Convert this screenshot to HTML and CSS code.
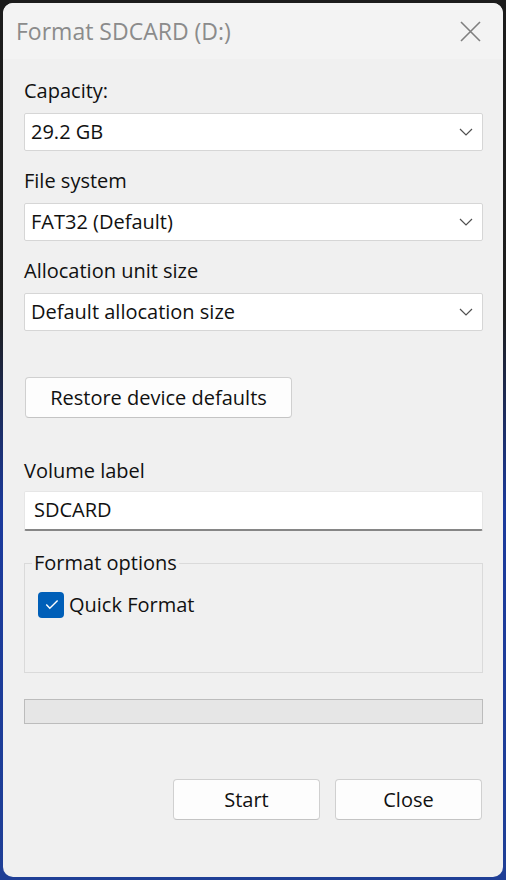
FILE: index.html
```html
<!DOCTYPE html>
<html>
<head>
    <meta charset="utf-8">
    <link rel="stylesheet" href="styles.css">
    <title>Format SDCARD (D:)</title>
</head>
<body>
    <div class="window">
        <div class="titlebar">
            <span class="title">Format SDCARD (D:)</span>
            <svg class="close" width="21" height="21" viewBox="0 0 21 21">
                <path d="M1 1 L20 20 M20 1 L1 20" stroke="#7f7f7f" stroke-width="1.6" fill="none"/>
            </svg>
        </div>

        <div class="content">
            <div class="field-label first">Capacity:</div>
            <div class="select">
                <span>29.2 GB</span>
                <svg class="chevron" width="14" height="8" viewBox="0 0 14 8"><path d="M1 1 L7 7 L13 1" stroke="#505050" stroke-width="1.2" fill="none"/></svg>
            </div>

            <div class="field-label">File system</div>
            <div class="select">
                <span>FAT32 (Default)</span>
                <svg class="chevron" width="14" height="8" viewBox="0 0 14 8"><path d="M1 1 L7 7 L13 1" stroke="#505050" stroke-width="1.2" fill="none"/></svg>
            </div>

            <div class="field-label">Allocation unit size</div>
            <div class="select">
                <span>Default allocation size</span>
                <svg class="chevron" width="14" height="8" viewBox="0 0 14 8"><path d="M1 1 L7 7 L13 1" stroke="#505050" stroke-width="1.2" fill="none"/></svg>
            </div>

            <button class="btn restore">Restore device defaults</button>

            <div class="field-label volume">Volume label</div>
            <div class="textbox">SDCARD</div>

            <fieldset class="group">
                <legend>Format options</legend>
                <label class="check">
                    <span class="box">
                        <svg width="26" height="26" viewBox="0 0 26 26"><path d="M8.3 12.6 L11.8 16.2 L19.6 8.6" stroke="#fff" stroke-width="1.4" fill="none"/></svg>
                    </span>
                    Quick Format
                </label>
            </fieldset>

            <div class="progress"></div>

            <div class="actions">
                <button class="btn action">Start</button>
                <button class="btn action">Close</button>
            </div>
        </div>
    </div>
</body>
</html>
```

FILE: styles.css
```css
body {
    margin: 0;
    height: 880px;
    overflow: hidden;
    font-family: "Open Sans", "Noto Sans", sans-serif;
    font-size: 20px;
    color: #111;
    background: linear-gradient(to bottom, #1c1c1c 0%, #1e1e1e 36%, #1b3a9c 58%, #1f3f96 100%);
}
.window {
    margin: 3px 0 0 3px;
    width: 500px;
    height: 874px;
    border-radius: 10px;
    background-color: #f0f0f0;
    overflow: hidden;
    display: flex;
    flex-direction: column;
}
.titlebar {
    height: 56px;
    flex-shrink: 0;
    background-color: #f3f3f3;
    display: flex;
    align-items: center;
    justify-content: space-between;
    padding: 0 22px 0 13px;
}
.title {
    font-size: 23px;
    color: #8b8b8b;
    line-height: 28px;
}
.content {
    padding: 0 20px 0 21px;
}
.field-label {
    line-height: 24px;
    margin: 18px 0 10px 0;
}
.field-label.first {
    margin-top: 20px;
}
.select {
    box-sizing: border-box;
    height: 38px;
    background-color: #fff;
    border: 1px solid #d6d6d6;
    border-radius: 2px;
    display: flex;
    align-items: center;
    justify-content: space-between;
    padding: 0 9px 0 6px;
    line-height: 24px;
}
.btn {
    font-family: inherit;
    font-size: 20px;
    color: #111;
    background-color: #fdfdfd;
    border: 1px solid #d0d0d0;
    border-bottom-color: #c4c4c4;
    border-radius: 4px;
    box-sizing: border-box;
    height: 41px;
    padding: 0;
    display: block;
}
.restore {
    width: 267px;
    margin: 46px 0 0 1px;
}
.field-label.volume {
    margin: 41px 0 8px 0;
}
.textbox {
    box-sizing: border-box;
    height: 40px;
    background-color: #fff;
    border: 1px solid #e6e6e6;
    border-bottom: 2px solid #868686;
    border-radius: 2px;
    padding: 0 9px;
    line-height: 36px;
}
.group {
    margin: 20px 0 0 0;
    padding: 0 0 54px 13px;
    border: 1px solid #dadada;
    min-width: 0;
}
.group legend {
    padding: 0 2px;
    margin-left: -6px;
    line-height: 24px;
}
.check {
    display: flex;
    align-items: center;
    gap: 5px;
    margin-top: 17px;
    line-height: 26px;
}
.box {
    width: 26px;
    height: 26px;
    border-radius: 4px;
    background-color: #005fb8;
    display: block;
}
.box svg {
    display: block;
}
.progress {
    box-sizing: border-box;
    height: 25px;
    margin-top: 26px;
    background-color: #e6e6e6;
    border: 1px solid #bcbcbc;
}
.actions {
    display: flex;
    justify-content: flex-end;
    gap: 15px;
    margin-top: 55px;
    padding-right: 1px;
}
.action {
    width: 147px;
}
```
